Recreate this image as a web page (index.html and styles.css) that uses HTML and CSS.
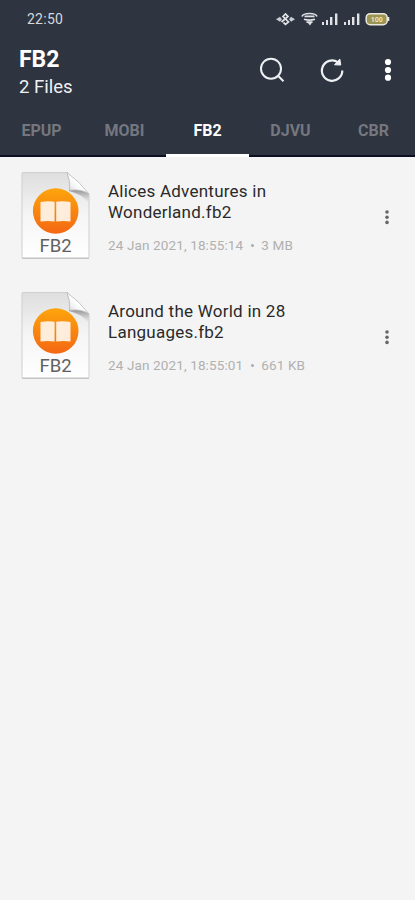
FILE: index.html
```html
<!DOCTYPE html>
<html lang="en">
<head>
<meta charset="utf-8">
<meta name="viewport" content="width=device-width, initial-scale=1">
<title>FB2 Files</title>
<link rel="stylesheet" href="styles.css">
</head>
<body>
<svg class="defs" aria-hidden="true">
  <defs>
    <linearGradient id="paper" x1="0" y1="0" x2="0" y2="1">
      <stop offset="0" stop-color="#dedede"/><stop offset=".5" stop-color="#f5f5f5"/><stop offset="1" stop-color="#fff"/>
    </linearGradient>
    <linearGradient id="orange" x1="0" y1="0" x2="0" y2="1">
      <stop offset="0" stop-color="#fda50d"/><stop offset="1" stop-color="#f46713"/>
    </linearGradient>
    <linearGradient id="fold" x1="0" y1="1" x2="1" y2="0">
      <stop offset="0" stop-color="#bdbdbd"/><stop offset=".3" stop-color="#f1f1f1"/><stop offset=".5" stop-color="#fff"/>
    </linearGradient>
    <linearGradient id="shade" x1="0" y1="0" x2="0" y2="1">
      <stop offset="0" stop-color="#777" stop-opacity=".75"/><stop offset="1" stop-color="#aaa" stop-opacity="0"/>
    </linearGradient>
    <symbol id="file" viewBox="0 0 70 90">
      <path d="M2.500 2.500H47L69 24V86.500Q69 88 67.500 88H3.500Q2 88 2 86.500V3Z" fill="url(#paper)" stroke="#cfcfcf"/>
      <path d="M2 88.300H69" stroke="#bdbdbd"/>
      <path d="M49 20Q62 19 68.500 24V33Q62 24 49 21Z" fill="url(#shade)"/>
      <path d="M47 2.500Q50.500 11 49.500 20.500Q61 18.500 69 24Q60 12 47 2.500Z" fill="url(#fold)" stroke="#b5b5b5" stroke-width=".8"/>
      <circle cx="35.700" cy="41" r="22.800" fill="url(#orange)"/>
      <path d="M20.500 32Q28 30.800 34.600 31.800V51.500Q28 50.500 20.500 51.500ZM36.200 31.800Q43 30.800 50.500 32V51.500Q43 50.500 36.200 51.500Z" fill="#ffeddb"/>
    </symbol>
  </defs>
</svg>
<header class="header">
  <div class="status">
    <span class="time">22:50</span>
    <svg class="status-icons" width="114" height="16" viewBox="0 0 114 16" fill="none">
      <path d="M0 8.200L4 5.700L6 8.200L4 10.700ZM13 8.200L15 5.700L19 8.200L15 10.700Z" fill="#c9ccd2"/>
      <path d="M5.500 11L12 5.500L9.500 3L7 5.500L12.500 11L9.500 13.300L7.500 11.500" stroke="#e1e3e7" stroke-width="1.700"/>
      <path d="M26 5.500Q27 2.500 33.500 2.500T41 5.500M28.500 5.300H38.500M28 8.300Q33.500 10 39 8.300M30.500 11.200H36.500" stroke="#dfe1e5" stroke-width="1.700"/>
      <path d="M31.500 11.500H36L34 14.500Z" fill="#dfe1e5"/>
      <path d="M46 11h2v3h-2zM50 9h2v5h-2zM54 6h2.400v8h-2.400zM59 2.500h2.400v11.500h-2.400zM68 11h2v3h-2zM72 9h2v5h-2zM76 6h2.400v8h-2.400zM81 2.500h2.400v11.500h-2.400z" fill="#e1e3e7"/>
      <rect x="90.200" y="2.700" width="21" height="11" rx="4" fill="#9d9452" stroke="#e9e9df" stroke-width="1.500"/>
      <path d="M112.300 6v4" stroke="#e9e9df" stroke-width="2"/>
      <text class="charge" x="100.700" y="11">100</text>
    </svg>
  </div>
  <div class="toolbar">
    <div class="heading">
      <h1>FB2</h1>
      <p>2 Files</p>
    </div>
    <div class="actions">
      <svg width="26" height="26" viewBox="0 0 26 26" fill="none" stroke="#eef0f3" stroke-width="2"><circle cx="12" cy="11.700" r="10"/><path d="M19 18.700L24.500 24.200"/></svg>
      <svg width="26" height="26" viewBox="0 0 26 26" fill="none" stroke="#eef0f3" stroke-width="2.200"><path d="M18.800 5.200A10.200 10.200 0 1 0 23.300 13.500"/><path d="M20.800 2L21.800 8L15.500 7.800Z" fill="#eef0f3" stroke-width="1"/></svg>
      <svg width="8" height="26" viewBox="0 0 8 26" fill="#fff"><circle cx="4" cy="5" r="3.100"/><circle cx="4" cy="13" r="3.100"/><circle cx="4" cy="20.700" r="3.100"/></svg>
    </div>
  </div>
  <nav class="tabs">
    <a>EPUP</a><a>MOBI</a><a class="active">FB2</a><a>DJVU</a><a>CBR</a>
  </nav>
</header>
<main class="files">
  <article class="file">
    <div class="thumb"><svg width="70" height="90"><use href="#file"/><text x="35.700" y="81.500">FB2</text></svg></div>
    <div class="info"><h2>Alices Adventures in<br>Wonderland.fb2</h2><p>24 Jan 2021, 18:55:14<i></i>3 MB</p></div>
    <svg class="more" width="6" height="16" viewBox="0 0 6 16"><circle cx="3" cy="3" r="1.800"/><circle cx="3" cy="8.200" r="1.800"/><circle cx="3" cy="13.400" r="1.800"/></svg>
  </article>
  <article class="file">
    <div class="thumb"><svg width="70" height="90"><use href="#file"/><text x="35.700" y="81.500">FB2</text></svg></div>
    <div class="info"><h2>Around the World in 28<br>Languages.fb2</h2><p>24 Jan 2021, 18:55:01<i></i>661 KB</p></div>
    <svg class="more" width="6" height="16" viewBox="0 0 6 16"><circle cx="3" cy="3" r="1.800"/><circle cx="3" cy="8.200" r="1.800"/><circle cx="3" cy="13.400" r="1.800"/></svg>
  </article>
</main>
</body>
</html>
```
FILE: styles.css
```css
* { box-sizing: border-box; }
body {
  margin: 0;
  min-height: 900px;
  background: #f4f4f4;
  font-family: Roboto, "Liberation Sans", sans-serif;
  color: #222;
}
h1, h2, p { margin: 0; }
svg { display: block; flex: none; }
.defs { width: 0; height: 0; position: absolute; }
.header {
  height: 157px;
  background: #2e3440;
}
.status {
  height: 38px;
  display: flex;
  justify-content: space-between;
  padding: 11px 25px 0 27px;
}
.time { font-size: 14px; line-height: 17px; letter-spacing: .25px; color: #d5d8dd; }
.charge { font-size: 7px; font-weight: 700; text-anchor: middle; fill: #e9e5c4; }
.toolbar {
  height: 66px;
  display: flex;
  justify-content: space-between;
  padding: 8px 23px 0 19px;
}
h1 { font-size: 23px; line-height: 28px; font-weight: 700; color: #fff; }
.heading p { font-size: 18.5px; line-height: 26px; color: #f0f1f3; }
.actions { display: flex; gap: 34px; padding-top: 11px; }
.actions svg:last-child { margin-left: 5px; }
.tabs {
  height: 53px;
  display: grid;
  grid-template-columns: repeat(5, 1fr);
  border-bottom: 2px solid #0c1020;
}
.tabs a {
  height: 53px;
  text-align: center;
  font-size: 16px;
  line-height: 53px;
  font-weight: 700;
  color: #74777f;
}
.tabs .active { color: #fff; border-bottom: 3px solid #fff; }
.files { padding-top: 13px; }
.file {
  height: 120px;
  display: flex;
  padding: 0 25px 0 20px;
}
.thumb text { font-size: 18.5px; text-anchor: middle; fill: #606060; }
.info { flex: 1; padding: 11px 0 0 18px; }
h2 { font-size: 17px; line-height: 21px; font-weight: 400; letter-spacing: .24px; color: #2a2a2a; }
.info p { margin-top: 12px; font-size: 13.5px; line-height: 20px; letter-spacing: .13px; color: #b0b0b0; }
.info i { display: inline-block; width: 3px; height: 3px; border-radius: 50%; background: #aaa; margin: 0 7.500px 3px; }
.more { margin-top: 39px; fill: #666; }
```
